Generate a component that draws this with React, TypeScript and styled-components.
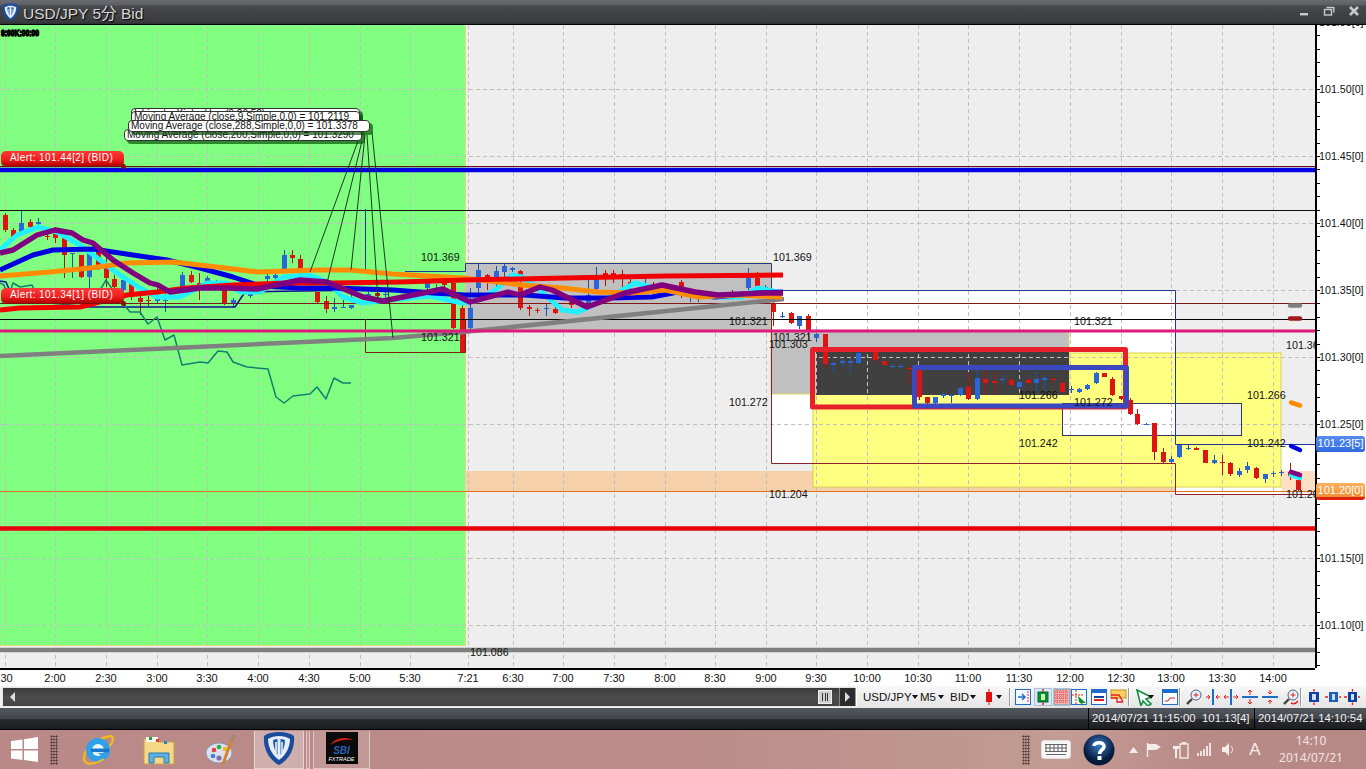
import React from "react";
import styled, { createGlobalStyle } from "styled-components";

const Global = createGlobalStyle`
  html, body { margin: 0; padding: 0; width: 1366px; height: 769px; overflow: hidden; background: #222; }
  #root { width: 1366px; height: 769px; }
  * { box-sizing: border-box; }
`;

const Win = styled.div`
  width: 1366px; height: 769px; display: flex; flex-direction: column;
  font-family: "Liberation Sans", Arial, sans-serif;
`;
const TitleBar = styled.header`
  height: 25px; flex: none; display: flex; align-items: center; padding: 0 0 0 2px; gap: 4px;
  background: linear-gradient(#6a6c72 0, #5c5e64 5px, #46484c 6px, #3a3b3f 22px, #2c2d30 24px, #000 24px);
`;
const TitleText = styled.span`
  font-size: 15.5px; color: #d8d8d8; text-shadow: 1px 1px 1px #000; margin-top: -2px; white-space: nowrap;
  font-family: "Liberation Sans", "Noto Sans CJK JP", sans-serif;
`;
const WinControls = styled.div`
  margin-left: auto; display: flex; align-items: center; height: 100%; padding-right: 5px; gap: 11px; margin-top: -3px;
`;
const ChartRow = styled.div`
  height: 643px; flex: none; display: flex;
`;
const PlotWrap = styled.div`
  position: relative; width: 1315px; height: 643px; overflow: hidden; background: #eeeeee;
`;
const Plot = styled.svg`
  display: block;
  text { font-family: "Liberation Sans", Arial, sans-serif; font-size: 10.7px; fill: #111; }
`;
const AlertTag = styled.div<{ $y: number }>`
  position: absolute; left: 1px; top: ${p => p.$y}px; width: 123px; height: 15px; border-radius: 5px;
  background: linear-gradient(#ff3a3a, #ee1c1c 60%, #b00000);
  box-shadow: 0 1px 0 #7a1010;
  color: #fff; font-size: 10px; line-height: 14px; padding-left: 9px; letter-spacing: .42px; white-space: nowrap;
`;
const AlertDot = styled.i<{ $y: number }>`
  position: absolute; left: 121px; top: ${p => p.$y}px; width: 5px; height: 5px; border-radius: 50%; background: #8a1010;
`;
const Bubble = styled.div<{ $x: number; $y: number; $w: number }>`
  position: absolute; left: ${p => p.$x}px; top: ${p => p.$y}px; width: ${p => p.$w}px; height: 12px;
  border: 1px solid #333; border-radius: 4px; background: #fff; color: #111;
  box-shadow: 3px 3px 0 rgba(0, 70, 0, .65);
  font-size: 10px; line-height: 10px; padding-left: 2px; white-space: nowrap; overflow: hidden;
`;
const PriceAxis = styled.div`
  position: relative; width: 51px; height: 643px; background: #fff; overflow: hidden;
`;
const AxisSvg = styled.svg`
  display: block;
  text { font-family: "Liberation Sans", Arial, sans-serif; font-size: 10.7px; fill: #111; }
`;
const PriceTag = styled.div<{ $y: number; $kind: "blue" | "orange" }>`
  position: absolute; left: 1px; top: ${p => p.$y}px; width: 49px; height: ${p => p.$kind === "blue" ? 16 : 17}px;
  border-radius: 3px; color: #fff; font-size: 11px; line-height: 15px; text-align: center;
  background: ${p => p.$kind === "blue"
    ? "linear-gradient(#5a8cf0, #2f6ae0)"
    : "linear-gradient(#ffb060, #f09030 82%, #e02010 84%, #e02010)"};
`;
const TimeAxis = styled.svg`
  display: block; flex: none; background: #fff;
  text { font-family: "Liberation Sans", Arial, sans-serif; font-size: 11px; fill: #111; }
`;
const ScrollRow = styled.div`
  height: 22px; flex: none; display: flex; background: #f0f0f0;
`;
const ScrollTrack = styled.div`
  width: 853px; flex: none; display: flex; align-items: center; padding: 0 0 0 7px; margin: 1px 0 1px 2px;
  background: linear-gradient(#3a3a3a, #4c4c4c 50%, #444); border: 1px solid #e4e4e4; border-right: 0; color: #ddd;
`;
const Arrow = styled.i<{ $dir: "left" | "right" }>`
  width: 0; height: 0; border: 5px solid transparent; border-width: 5px 0;
  ${p => p.$dir === "left" ? "border-right: 5px solid #ddd; border-left: 0; border-top: 5px solid transparent;" : "border-left: 5px solid #ddd; border-right: 0;"}
`;
const ThumbGrip = styled.div`
  margin-left: auto; margin-right: 7px; width: 14px; height: 14px; background: #d0d0d0; padding: 2px 3px;
  display: flex; justify-content: space-between; border: 1px solid #eee;
  b { width: 1px; background: #333; display: block; }
`;
const RightBtn = styled.div`
  width: 16px; height: 100%; background: #2c2c2c; display: flex; align-items: center; justify-content: center; border-left: 1px solid #888;
`;
const Toolbar = styled.div`
  flex: 1; display: flex; align-items: center; color: #111; font-size: 11.5px;
  background: linear-gradient(#f8f8f8, #e4e4e4);
`;
const Sep = styled.i<{ $l: number }>`
  width: 2px; height: 18px; margin-left: ${p => p.$l}px; flex: none; border-left: 1px solid #999; border-right: 1px solid #fff;
`;
const Drop = styled.span<{ $l: number; $w: number }>`
  margin-left: ${p => p.$l}px; width: ${p => p.$w}px; flex: none; display: flex; justify-content: space-between; align-items: center; white-space: nowrap;
  &::after { content: ""; border: 3.5px solid transparent; border-top: 4px solid #111; border-bottom: 0; }
`;
const ToolBtn = styled.span<{ $l: number; $on?: boolean }>`
  margin-left: ${p => p.$l}px; width: 18px; height: 18px; flex: none; display: flex; align-items: center; justify-content: center;
  ${p => p.$on ? "background: #dce8f4; box-shadow: inset 0 0 0 1px #a8c0d8;" : ""}
`;
const StatusBar = styled.div`
  height: 22px; flex: none; display: flex; justify-content: flex-end; color: #f0f0f0; font-size: 11.4px;
  background: linear-gradient(#52565e, #42464c 50%, #2a2b2e 52%, #1c1d20);
  border-bottom: 1px solid #000;
`;
const StatusCell = styled.div<{ $w: number }>`
  width: ${p => p.$w}px; padding-left: 3px; line-height: 21px; border-left: 1px solid #000; white-space: pre;
`;
const Taskbar = styled.footer`
  flex: 1; display: flex; align-items: center; position: relative;
  background: linear-gradient(90deg, #b88986 0, #bb8c89 50%, #c09a90 75%, #c49c94 78%, #b88a86 88%, #b78986 100%);
`;
const Item = styled.div<{ $l: number; $w: number }>`
  margin-left: ${p => p.$l}px; width: ${p => p.$w}px; height: 100%; flex: none; display: flex; align-items: center; justify-content: center;
`;
const Grip = styled.div<{ $l: number }>`
  margin-left: ${p => p.$l}px; width: 8px; height: 30px; flex: none;
  background-image: radial-gradient(#5a4040 45%, transparent 55%); background-size: 2.6px 3px;
`;
const AppBtn = styled.div<{ $l: number; $w: number; $on?: boolean }>`
  margin-left: ${p => p.$l}px; width: ${p => p.$w}px; height: 38px; flex: none; display: flex; align-items: center; justify-content: center;
  background: rgba(255,255,255,${p => p.$on ? .32 : .12}); border: 1px solid rgba(255,255,255,.45); border-top: 0;
`;
const SbiTile = styled.div`
  width: 32px; height: 32px; background: #0a0a0a; margin-top: -2px; position: relative; display: flex; flex-direction: column; align-items: center; justify-content: flex-end;
  color: #fff; font-size: 5.6px; padding-bottom: 2px; font-style: italic;
  strong { font-size: 10px; line-height: 10px; color: #2a5fb8; font-weight: 700; }
  svg { position: absolute; left: 3px; top: 4px; }
`;
const Clock = styled.div`
  margin-left: 15px; width: 70px; text-align: center; color: #f0e4e0; font-size: 12px; line-height: 16px; display: flex; flex-direction: column; gap: 1px; margin-top: -1px;
  font-family: "Noto Sans", sans-serif;
`;
const ImeA = styled.span`
  font-size: 17px; color: #f4ecea; font-family: "Liberation Sans", sans-serif;
`;

/* ---------- chart data (page coordinates) ---------- */
type C = [number, number, number, number, number, "r" | "b"];
const candles: C[] = [
  [5,213,215,230,232,"r"],[13,228,230,237,240,"r"],[21,210,223,232,233,"b"],[30,219,222,227,228,"r"],[38,218,222,224,226,"b"],
  [47,232,236,237,240,"r"],[55,227,233,238,243,"r"],[64,238,238,255,278,"r"],[72,253,253,254,278,"b"],[81,255,255,277,278,"r"],
  [89,250,253,277,288,"b"],[98,248,252,267,270,"r"],[106,257,268,278,287,"r"],[114,275,279,287,290,"r"],[123,276,280,290,292,"b"],
  [131,280,283,297,300,"r"],[140,295,298,302,315,"r"],[148,296,300,301,306,"r"],[157,285,298,301,304,"b"],[165,293,300,301,312,"b"],
  [182,272,275,287,292,"b"],[191,271,275,282,283,"r"],[199,273,283,285,300,"r"],[207,276,278,282,284,"b"],[216,280,281,283,288,"r"],
  [224,285,290,303,305,"r"],[233,298,300,303,308,"b"],[241,285,288,290,292,"b"],[250,290,292,296,298,"b"],[267,273,276,279,285,"b"],
  [275,270,275,278,282,"b"],[284,250,255,270,272,"b"],[292,250,255,258,263,"r"],[300,255,259,270,275,"r"],[317,292,292,302,303,"r"],
  [326,296,301,309,313,"r"],[334,298,307,309,312,"b"],[343,300,307,308,308,"b"],[351,294,297,300,301,"b"],[351,305,305,308,309,"b"],
  [368,292,294,296,302,"b"],[377,290,293,296,299,"r"],[385,291,294,295,298,"b"],[427,280,283,288,296,"b"],[436,284,288,289,296,"b"],
  [444,278,283,285,288,"r"],[453,282,283,328,329,"r"],[462,305,308,352,353,"r"],[470,288,308,328,329,"b"],[478,264,270,288,296,"b"],
  [487,274,275,277,290,"r"],[496,266,271,280,292,"b"],[504,264,266,272,278,"b"],[512,267,268,270,272,"b"],[520,270,271,275,285,"r"],
  [520,285,287,308,310,"r"],[529,305,307,309,316,"r"],[537,308,310,311,313,"r"],[546,303,308,309,316,"b"],[555,307,309,313,314,"r"],
  [571,302,302,305,308,"r"],[588,276,295,304,310,"b"],[596,267,276,289,294,"b"],[605,270,273,275,286,"r"],[613,270,273,275,283,"r"],
  [622,270,274,276,290,"r"],[630,279,282,284,298,"r"],[645,279,284,286,290,"b"],[653,282,285,288,294,"r"],[681,280,282,287,298,"r"],
  [690,290,294,296,302,"b"],[698,292,296,297,302,"b"],[715,292,295,296,298,"b"],[732,290,294,296,300,"r"],[748,268,278,288,290,"b"],
  [757,272,278,286,290,"r"],[765,285,287,289,292,"b"],[773,296,304,312,326,"r"],[782,312,316,317,318,"b"],[791,312,313,323,324,"r"],
  [799,316,316,326,329,"b"],[808,314,316,330,340,"r"],[816,333,334,338,342,"b"],[825,334,334,364,368,"r"],[833,363,363,365,372,"b"],
  [842,358,361,363,366,"b"],[850,358,361,363,372,"b"],[858,352,353,363,364,"b"],[867,351,351,352,352,"b"],[875,351,352,360,362,"r"],
  [884,361,361,365,366,"r"],[892,364,366,367,368,"b"],[900,364,366,367,368,"b"],[909,366,368,369,384,"r"],[919,368,370,397,400,"r"],
  [927,397,397,403,404,"r"],[935,397,397,403,405,"b"],[943,392,394,396,398,"b"],[951,394,395,396,403,"b"],[960,387,388,395,396,"b"],
  [968,373,387,399,400,"r"],[977,370,378,399,400,"b"],[985,370,379,383,395,"r"],[994,372,381,383,395,"r"],[1002,375,379,380,383,"b"],
  [1011,378,380,385,386,"r"],[1019,380,382,387,388,"b"],[1028,378,380,383,385,"r"],[1036,372,379,383,392,"b"],[1044,376,378,380,390,"b"],
  [1053,375,379,380,383,"r"],[1062,379,383,392,393,"r"],[1071,386,389,390,393,"b"],[1079,388,389,392,393,"b"],[1087,384,385,389,390,"b"],
  [1096,372,373,383,384,"b"],[1104,373,373,377,377,"r"],[1112,377,379,395,396,"r"],[1121,396,396,399,400,"r"],[1130,398,400,414,415,"r"],
  [1137,409,414,424,425,"r"],[1146,423,424,425,425,"b"],[1154,423,423,452,460,"r"],[1163,448,452,462,463,"r"],[1171,456,459,462,463,"b"],
  [1179,444,444,457,458,"b"],[1188,445,448,449,450,"b"],[1196,447,448,450,450,"r"],[1205,450,450,463,463,"r"],[1214,455,460,463,464,"b"],
  [1222,455,462,463,475,"r"],[1230,462,463,474,476,"r"],[1239,468,471,475,477,"b"],[1247,462,466,470,473,"b"],[1256,467,468,478,479,"r"],
  [1265,474,474,479,483,"b"],[1273,471,473,474,477,"b"],[1281,470,472,473,476,"b"],[1290,463,472,476,480,"r"],[1298,478,480,490,491,"r"],
];
const hGrid = [89, 156, 223, 290, 357, 424, 491, 558, 625];
const vGrid = [5,55,106,157,207,258,309,360,410,468,513,563,614,665,715,766,816,867,918,968,1019,1070,1121,1171,1222,1273];
const timeLabels: [number, string][] = [[5,":30"],[55,"2:00"],[106,"2:30"],[157,"3:00"],[207,"3:30"],[258,"4:00"],[309,"4:30"],[360,"5:00"],[410,"5:30"],[468,"7:21"],[513,"6:30"],[563,"7:00"],[614,"7:30"],[665,"8:00"],[715,"8:30"],[766,"9:00"],[816,"9:30"],[867,"10:00"],[918,"10:30"],[968,"11:00"],[1019,"11:30"],[1070,"12:00"],[1121,"12:30"],[1171,"13:00"],[1222,"13:30"],[1273,"14:00"]];
const notes: [number, number, string][] = [[421,261,"101.369"],[773,261,"101.369"],[421,341,"101.321"],[729,325,"101.321"],[773,341,"101.321"],[769,348,"101.303"],[729,406,"101.272"],[769,498,"101.204"],[1074,325,"101.321"],[1286,349,"101.36"],[1019,399,"101.266"],[1074,406,"101.272"],[1247,399,"101.266"],[1019,447,"101.242"],[1247,447,"101.242"],[1286,498,"101.20"],[470,656,"101.086"]];

const P = (a: number[][]) => a.map(p => p.join(",")).join(" ");
const teal = [[0,283],[4,285],[8,298],[13,283],[20,287],[32,285],[40,302],[90,307],[106,280],[115,293],[130,312],[140,312],[148,324],[157,317],[165,340],[174,335],[182,365],[200,362],[208,363],[218,351],[227,352],[233,362],[247,367],[268,369],[276,397],[284,403],[293,396],[310,394],[317,387],[326,399],[334,378],[343,383],[351,383]];
const gray = [[0,356],[393,338],[463,332],[784,299]];
const orange = [[0,276],[50,272],[90,268],[127,263],[173,262],[217,267],[257,272],[317,270],[350,270],[393,274],[463,278],[522,285],[562,288],[598,292],[632,293],[665,290],[698,297],[738,295],[782,297]];
const blue = [[0,270],[33,255],[53,250],[93,249],[133,255],[167,260],[200,268],[233,277],[260,286],[300,288],[333,288],[393,290],[433,293],[465,295],[525,295],[565,298],[608,298],[652,297],[678,292],[715,297],[758,293],[783,292]];
const cyan = [[0,250],[17,235],[38,227],[57,232],[80,245],[100,260],[117,273],[140,288],[157,297],[180,297],[207,283],[227,283],[240,292],[260,292],[283,277],[310,275],[327,282],[343,297],[363,303],[387,300],[430,296],[462,303],[480,300],[498,288],[512,275],[522,277],[542,292],[562,310],[578,312],[608,298],[635,283],[655,288],[678,293],[715,297],[742,297],[758,288],[782,293]];
const purple = [[0,253],[13,250],[37,235],[55,230],[72,233],[83,240],[93,243],[113,260],[133,273],[150,283],[158,285],[170,292],[200,288],[227,288],[257,289],[300,280],[327,282],[363,297],[383,301],[443,289],[470,302],[508,292],[520,295],[540,287],[552,290],[587,307],[625,293],[662,285],[695,292],[718,295],[765,293],[783,293]];
const red = [[0,310],[20,308],[80,307],[127,295],[157,292],[187,288],[233,285],[287,283],[333,283],[400,282],[465,280],[565,278],[665,276],[783,275]];
const navy = [[0,281],[6,282],[12,296],[60,303],[75,307],[235,307],[245,292],[365,290]];
const leaders = [[358,141,310,272],[362,141,327,283],[365,135,351,270],[367,135,378,300],[372,132,393,338]];

const Chart = () => (
  <Plot width={1315} height={643} viewBox="0 25 1315 643">
    <rect x={0} y={25} width={465} height={620} fill="#80ff80" />
    <path d="M465.5 25V645.5H0" fill="none" stroke="#e0e070" />
    <rect x={465} y={471} width={850} height={20} fill="#f5d0a8" />
    <rect x={1282} y={444} width={33} height={27} fill="#fff" />
    <rect x={1175} y={444} width={107} height={50} fill="#fff" />
    <rect x={1282} y={471} width={33} height={20} fill="#ffdfc4" />
    <rect x={771} y={291} width={404} height={172} fill="#fff" />
    <rect x={465} y={263} width={306} height={68} fill="#c0c0c0" stroke="#e0d860" />
    <rect x={813} y={353} width={468} height={134} fill="#ffff80" stroke="#d8d050" />
    <rect x={771} y={331} width={298} height={63} fill="#c0c0c0" stroke="#e0d860" />
    <rect x={816} y={352} width={253} height={43} fill="#404040" />
    <rect x={1062} y={403} width={113} height={32} fill="#fff" />
    <rect x={1175} y={403} width={66} height={32} fill="#eee" />
    <g stroke="#c0c0c0" strokeDasharray="4 3">
      {hGrid.map(y => <line key={y} x1={0} x2={1315} y1={y + .5} y2={y + .5} />)}
      {vGrid.map(x => <line key={x} x1={x + .5} x2={x + .5} y1={25} y2={668} />)}
    </g>
    <rect x={1062.5} y={403.5} width={179} height={32} fill="none" stroke="#303860" />
    {candles.map(([x, h, t, b, l, c], i) => {
      const col = c === "r" ? "#dc1414" : "#2a66d8";
      return (
        <g key={i}>
          <line x1={x + .5} x2={x + .5} y1={h} y2={l} stroke={c === "r" ? "#b01010" : "#2050a8"} />
          <rect x={x - 2} y={t} width={5} height={Math.max(b - t, 1)} fill={col} />
        </g>
      );
    })}
    <g fill="none" strokeLinejoin="round">
      <path d="M0 166.5H1315" stroke="#6a1010" />
      <path d="M0 170H1315" stroke="#0000e0" strokeWidth={4.5} />
      <path d="M0 210.5H1315" stroke="#101010" />
      <path d="M0 303.5H1315" stroke="#801818" />
      <path d="M0 319.5H1315" stroke="#000" />
      <path d="M465 491.5H0M465 491.5H1315" stroke="#e07020" />
      <path d="M365.5 319V352.5H465.5V320" stroke="#802010" />
      <path d="M771.5 303V463.5H1175.5V494.5H1315" stroke="#902030" />
      <path d="M365.5 209V271M405 271.5H465.5V263.5H771.5V290.5H1175.5V444.5H1315" stroke="#203890" />
      <polyline points={P(navy)} stroke="#101090" strokeWidth={1.5} />
      <polyline points={P(teal)} stroke="#108070" strokeWidth={1.5} />
      <polyline points={P(gray)} stroke="#808080" strokeWidth={4.5} />
      <polyline points={P(cyan)} stroke="#20f0ff" strokeWidth={5} />
      <polyline points={P(blue)} stroke="#0000e0" strokeWidth={5} />
      <polyline points={P(orange)} stroke="#ff8c00" strokeWidth={5} />
      <polyline points={P(red)} stroke="#f00000" strokeWidth={5} />
      <polyline points={P(purple)} stroke="#800080" strokeWidth={5.4} />
      <path d="M0 331H1315" stroke="#e0187a" strokeWidth={3} />
      <path d="M0 528.5H1315" stroke="#e8000c" strokeWidth={4.5} />
      <path d="M0 650H1315" stroke="#808080" strokeWidth={4.5} />
      {leaders.map((l, i) => <line key={i} x1={l[0]} y1={l[1]} x2={l[2]} y2={l[3]} stroke="#1a3a22" />)}
      <rect x={812.5} y={349.5} width={313} height={57.5} stroke="#e8202c" strokeWidth={5} />
      <rect x={914.5} y={367.5} width={212} height={38.5} stroke="#3b48c0" strokeWidth={5} />
      <g strokeLinecap="round" strokeWidth={4.5}>
        <path d="M1290 305.5H1300" stroke="#808080" />
        <path d="M1290 318.5H1300" stroke="#a01818" />
        <path d="M1291 402.5L1300 405.5" stroke="#ff8c00" />
        <path d="M1291 446L1300 450" stroke="#0000e0" />
        <path d="M1291 475L1300 478" stroke="#20f0ff" />
        <path d="M1291 472L1300 475" stroke="#800080" />
      </g>
    </g>
    {notes.map(([x, y, s], i) => <text key={i} x={x} y={y}>{s}</text>)}
    <text x={1} y={36} fontWeight={700} stroke="#000" strokeWidth={1.3} textLength={38} lengthAdjust="spacingAndGlyphs" style={{ fontSize: 9 }}>9:00K:00:00</text>
  </Plot>
);

const axisLabels = [["101.55[0]", 22], ["101.50[0]", 89], ["101.45[0]", 156], ["101.40[0]", 223], ["101.35[0]", 290], ["101.30[0]", 357], ["101.25[0]", 424], ["101.20[0]", 491], ["101.15[0]", 558], ["101.10[0]", 625]] as [string, number][];
const ticks = Array.from({ length: 50 }, (_, i) => 35.4 + i * 13.4);
const Axis = () => (
  <AxisSvg width={51} height={643} viewBox="1315 25 51 643">
    <path d="M1316 25V668" stroke="#000" strokeWidth={2} />
    {ticks.map((y, i) => <line key={i} x1={1316} x2={1320} y1={Math.round(y) + .5} y2={Math.round(y) + .5} stroke="#000" />)}
    {axisLabels.map(([s, y]) => <text key={s} x={1319} y={y + 4}>{s}</text>)}
  </AxisSvg>
);

const Shield = ({ s }: { s: number }) => (
  <svg width={s} height={s * 1.1} viewBox="0 0 32 35">
    <path d="M16 1C22 1 27 2 31 5C32 17 27 28 16 34C5 28 0 17 1 5C5 2 10 1 16 1Z" fill="#1b4c9c" />
    <path d="M16 5C20 5 24 6 27 8C27 16 23 24 16 29C9 24 5 16 5 8C8 6 12 5 16 5Z" fill="#e8eef8" />
    <path d="M16 8C18 8 20 8 22 9C22 15 20 20 17.5 24V8ZM16 8C14 8 12 8 10 9C10 15 12 20 14.5 24V8Z" fill="#1b5cb0" />
    <path d="M13 11V22M19 11V22" stroke="#e8eef8" strokeWidth={1.6} />
  </svg>
);

type K = "goto" | "hold" | "grid" | "cross" | "win" | "note" | "cursor" | "panel" | "zoomin" | "h1" | "h2" | "v1" | "v2" | "zoomout" | "s1" | "s2" | "s3";
const Tool = ({ k }: { k: K }) => {
  const blue = "#1c6cc8";
  const red = "#e02020";
  const body: Record<K, React.ReactNode> = {
    goto: <><rect x=".5" y=".5" width="15" height="15" fill="#f4f8ff" stroke={blue} /><path d="M3 8H10M7 5L10 8L7 11" stroke={blue} fill="none" strokeWidth="1.5" /><path d="M13 2V14" stroke={red} strokeDasharray="2 1" /></>,
    hold: <><rect x="3" y="3" width="10" height="10" fill="#109020" stroke="#064" /><rect x="6" y="5" width="4" height="6" fill="#bfb" /><path d="M8 0V2.5M8 13.5V16" stroke={red} strokeWidth="1.5" /></>,
    grid: <><rect x=".5" y=".5" width="15" height="15" fill="#f8b0b0" stroke="#a8a8a8" /><path d="M3 1V15M6 1V15M9 1V15M12 1V15M1 3H15M1 6H15M1 9H15M1 12H15" stroke="#e04040" strokeDasharray="1 1" /></>,
    cross: <><rect x=".5" y=".5" width="15" height="15" fill="#f4fff4" stroke={blue} /><path d="M5 1V15M1 6H12" stroke={red} strokeDasharray="2 1" /><path d="M7 7L15 14L11 14L13 17L8 13Z" fill="#109030" /></>,
    win: <><rect x=".5" y=".5" width="15" height="15" fill="#fff" stroke={blue} /><rect x="1" y="1" width="14" height="3" fill={blue} /><path d="M3 8H13" stroke="#1040a0" strokeWidth="2" /><path d="M3 11H13" stroke={red} strokeWidth="2" /></>,
    note: <><rect x="1" y="1" width="15" height="8" fill="#ffd060" stroke="#c89020" /><path d="M1 6H9L13 13M1 9H7V13H13" stroke={red} fill="none" strokeWidth="1.3" /></>,
    cursor: <path d="M2 1L16 8L11 10L16 15L13 17L8 12L6 17Z" fill="#fff" stroke="#109040" strokeWidth="1.6" />,
    panel: <><rect x=".5" y=".5" width="15" height="15" fill="#fff" stroke={blue} /><rect x="1" y="1" width="14" height="3" fill={blue} /><path d="M3 12H6L8 9H13" stroke={red} fill="none" /></>,
    zoomin: <><circle cx="10" cy="6" r="5" fill="#e8f4ff" stroke="#506070" /><path d="M7.5 6H12.5M10 3.5V8.5" stroke={red} /><path d="M6 10L1 15" stroke="#404040" strokeWidth="2.4" /></>,
    h1: <><path d="M8 0V16" stroke={blue} strokeWidth="2" /><path d="M1 8H5M3 6L5 8L3 10M15 8H11M13 6L11 8L13 10" stroke={red} fill="none" /></>,
    h2: <><path d="M8 0V16" stroke={blue} strokeWidth="2" /><path d="M6 8H1M3 6L1 8L3 10M10 8H15M13 6L15 8L13 10" stroke={red} fill="none" /></>,
    v1: <><path d="M0 8H16" stroke={blue} strokeWidth="2" /><path d="M8 6V1M6 3L8 1L10 3M8 10V15M6 13L8 15L10 13" stroke={red} fill="none" /></>,
    v2: <><path d="M0 8H16" stroke={blue} strokeWidth="2" /><path d="M8 1V5M6 3L8 5L10 3M8 15V11M6 13L8 11L10 13" stroke={red} fill="none" /></>,
    zoomout: <><circle cx="10" cy="6" r="5" fill="#e8f4ff" stroke="#506070" /><path d="M7.5 6H12.5M10 3.5V8.5" stroke={red} /><path d="M6 10L1 15" stroke="#404040" strokeWidth="2.4" /><path d="M8 14Q12 16 15 12" stroke={red} fill="none" strokeWidth="1.4" /></>,
    s1: <><rect x="3" y="3" width="10" height="10" fill="#1040a0" /><rect x="6" y="5" width="4" height="6" fill="#cfe0ff" /><path d="M8 0V2.5M8 13.5V16" stroke={red} strokeWidth="1.4" /></>,
    s2: <><rect x="4" y="3" width="9" height="10" fill="#1c60c0" /><rect x="7" y="5" width="3" height="6" fill="#cfe0ff" /><path d="M0 8H3M14 8H16" stroke={red} strokeWidth="1.4" /></>,
    s3: <><rect x="4" y="3" width="9" height="10" fill="#1040a0" /><rect x="7" y="5" width="3" height="6" fill="#cfe0ff" /><path d="M0 8H3M14 8H16M8.5 0V2.5M8.5 13.5V16" stroke={red} strokeWidth="1.4" /></>,
  };
  return <svg width={17} height={17} viewBox="0 0 17 17">{body[k]}</svg>;
};

export default function App() {
  return (
    <Win>
      <Global />
      <TitleBar>
        <Shield s={17} />
        <TitleText>USD/JPY 5分 Bid</TitleText>
        <WinControls>
          <svg width={14} height={14} viewBox="0 0 14 14"><rect x="3" y="9" width="8" height="2.4" fill="#c8c8c8" /></svg>
          <svg width={14} height={14} viewBox="0 0 14 14"><rect x="2.5" y="5.5" width="7" height="5.5" fill="none" stroke="#c8c8c8" strokeWidth="1.4" /><path d="M4.5 3.5H11.8V8.5" fill="none" stroke="#c8c8c8" strokeWidth="1.4" /></svg>
          <svg width={14} height={14} viewBox="0 0 14 14"><path d="M3 3L11 11M11 3L3 11" stroke="#c8c8c8" strokeWidth="2.6" /></svg>
        </WinControls>
      </TitleBar>
      <ChartRow>
        <PlotWrap>
          <Chart />
          <AlertTag $y={126}>Alert: 101.44[2] (BID)</AlertTag>
          <AlertDot $y={139} />
          <AlertTag $y={263}>Alert: 101.34[1] (BID)</AlertTag>
          <AlertDot $y={276} />
          <Bubble $x={124} $y={104} $w={238}>Moving Average (close,200,Simple,0,0) = 101.3290</Bubble>
          <Bubble $x={131} $y={83} $w={229}>Ichimoku Kinko Hyo (9,26,52)</Bubble>
          <Bubble $x={131} $y={86} $w={229}>Moving Average (close,9,Simple,0,0) = 101.2119</Bubble>
          <Bubble $x={128} $y={95} $w={242}>Moving Average (close,288,Simple,0,0) = 101.3378</Bubble>
        </PlotWrap>
        <PriceAxis>
          <Axis />
          <PriceTag $y={411} $kind="blue">101.23[5]</PriceTag>
          <PriceTag $y={458} $kind="orange">101.20[0]</PriceTag>
        </PriceAxis>
      </ChartRow>
      <TimeAxis width={1366} height={18} viewBox="0 668 1366 18">
        <rect x={0} y={668} width={1315} height={2} fill="#000" />
        {timeLabels.map(([x, s]) => (
          <g key={s}>
            <path d={`M${x + .5} 662V668`} stroke="#000" />
            <text x={x} y={682} textAnchor="middle">{s}</text>
          </g>
        ))}
      </TimeAxis>
      <ScrollRow>
        <ScrollTrack>
          <Arrow $dir="left" />
          <ThumbGrip><b /><b /><b /></ThumbGrip>
          <RightBtn><Arrow $dir="right" /></RightBtn>
        </ScrollTrack>
        <Toolbar>
          <Sep $l={0} />
          <Drop $l={6} $w={50}>USD/JPY</Drop>
          <Drop $l={7} $w={24}>M5</Drop>
          <Drop $l={6} $w={26}>BID</Drop>
          <ToolBtn $l={4}>
            <svg width={10} height={16} viewBox="0 0 10 16"><path d="M5 0V16" stroke="#e01010" /><rect x="2" y="3" width="6" height="10" fill="#e01010" /></svg>
          </ToolBtn>
          <Drop $l={-2} $w={7} />
          <Sep $l={6} />
          <ToolBtn $l={3}><Tool k="goto" /></ToolBtn>
          <ToolBtn $l={2} $on><Tool k="hold" /></ToolBtn>
          <ToolBtn $l={1} $on><Tool k="grid" /></ToolBtn>
          <ToolBtn $l={-1}><Tool k="cross" /></ToolBtn>
          <ToolBtn $l={2}><Tool k="win" /></ToolBtn>
          <ToolBtn $l={1}><Tool k="note" /></ToolBtn>
          <Sep $l={1} />
          <ToolBtn $l={4}><Tool k="cursor" /></ToolBtn>
          <Drop $l={-4} $w={7} />
          <ToolBtn $l={6}><Tool k="panel" /></ToolBtn>
          <Sep $l={0} />
          <ToolBtn $l={4}><Tool k="zoomin" /></ToolBtn>
          <ToolBtn $l={1}><Tool k="h1" /></ToolBtn>
          <ToolBtn $l={0}><Tool k="h2" /></ToolBtn>
          <ToolBtn $l={1}><Tool k="v1" /></ToolBtn>
          <ToolBtn $l={2}><Tool k="v2" /></ToolBtn>
          <ToolBtn $l={3}><Tool k="zoomout" /></ToolBtn>
          <Sep $l={0} />
          <ToolBtn $l={3}><Tool k="s1" /></ToolBtn>
          <ToolBtn $l={1}><Tool k="s2" /></ToolBtn>
          <ToolBtn $l={1}><Tool k="s3" /></ToolBtn>
        </Toolbar>
      </ScrollRow>
      <StatusBar>
        <StatusCell $w={166}>2014/07/21 11:15:00  101.13[4]</StatusCell>
        <StatusCell $w={112}>2014/07/21 14:10:54</StatusCell>
      </StatusBar>
      <Taskbar>
        <Item $l={11} $w={27}>
          <svg width={27} height={25} viewBox="0 0 27 25"><path d="M0 4L11.5 2.4V12H0ZM13 2.2L27 0V12H13ZM0 13.5H11.5V23L0 21.5ZM13 13.5H27V25L13 23Z" fill="#fff" /></svg>
        </Item>
        <Grip $l={12} />
        <Item $l={24} $w={32}>
          <svg width={32} height={32} viewBox="0 0 32 32">
            <path d="M3 28C-2 18 14 4 29 2C32 3 31 9 27 13" fill="none" stroke="#f4b820" strokeWidth="2.4" />
            <circle cx="16" cy="16" r="12" fill="#30a0e8" />
            <circle cx="16" cy="16" r="6" fill="#e8f6ff" />
            <rect x="9" y="14.5" width="18" height="3.6" fill="#1878c8" />
            <path d="M27 19L16 19L22 24" fill="#30a0e8" />
            <path d="M3 28C6 31 14 30 22 25" fill="none" stroke="#f4b820" strokeWidth="2" />
          </svg>
        </Item>
        <Item $l={29} $w={32}>
          <svg width={32} height={30} viewBox="0 0 32 30">
            <path d="M1 4H13L15 7H31V29H1Z" fill="#f5d888" stroke="#c8a050" />
            <rect x="3" y="2" width="12" height="5" fill="#f8f8f0" /><rect x="6" y="2" width="3" height="3" fill="#20a040" /><rect x="13" y="4" width="3" height="3" fill="#e04020" /><rect x="21" y="6" width="3" height="3" fill="#3080d0" />
            <path d="M6 28V18H26V28H21V22H11V28Z" fill="#60b0e0" stroke="#2878b8" />
          </svg>
        </Item>
        <Item $l={30} $w={32}>
          <svg width={32} height={32} viewBox="0 0 32 32">
            <ellipse cx="14" cy="19" rx="13" ry="10" fill="#dde0ee" stroke="#909ab0" />
            <circle cx="9" cy="16" r="2.3" fill="#e04040" /><circle cx="14" cy="13" r="2.3" fill="#30b040" /><circle cx="20" cy="15" r="2.3" fill="#e0c020" /><circle cx="8" cy="22" r="2.3" fill="#4080e0" /><circle cx="14" cy="24" r="2.6" fill="#8070b0" />
            <path d="M18 30L27 5" stroke="#d88030" strokeWidth="3" /><path d="M26 7L30 1" stroke="#a08870" strokeWidth="3.4" />
          </svg>
        </Item>
        <AppBtn $l={17} $w={50} $on><Shield s={32} /></AppBtn>
        <AppBtn $l={2} $w={4} />
        <AppBtn $l={3} $w={57}>
          <SbiTile>
            <svg width={26} height={10} viewBox="0 0 26 10"><path d="M1 9C6 2 16 0 25 4C18 3 8 4 1 9Z" fill="#d02020" /></svg>
            <strong>SBI</strong>
            <span>FXTRADE</span>
          </SbiTile>
        </AppBtn>
        <Grip $l={652} />
        <Item $l={11} $w={30}>
          <svg width={30} height={19} viewBox="0 0 30 19"><rect x=".7" y=".7" width="28.6" height="17.6" rx="2" fill="#f8f8f8" stroke="#e8e8e8" /><path d="M4 4.5H26M4 8H26M4 11.5H26M5 14.5H25M5 4V12M9 4V12M13 4V12M17 4V12M21 4V12M25 4V12" stroke="#555" strokeWidth=".9" /></svg>
        </Item>
        <Item $l={12} $w={32}>
          <svg width={32} height={32} viewBox="0 0 32 32"><defs><radialGradient id="hg" cx=".5" cy=".35"><stop offset="0" stopColor="#3a7cc8" /><stop offset="1" stopColor="#061a3c" /></radialGradient></defs><circle cx="16" cy="16" r="15.5" fill="url(#hg)" /><path d="M11 12C11 8 21 7 21 12.5C21 16 16.5 16 16.5 20" fill="none" stroke="#fff" strokeWidth="3.6" /><rect x="14.5" y="22" width="4" height="4" fill="#fff" /></svg>
        </Item>
        <Item $l={12} $w={12}>
          <svg width={9} height={6} viewBox="0 0 9 6"><path d="M0 6L4.5 0L9 6Z" fill="#f4ecea" /></svg>
        </Item>
        <Item $l={7} $w={16}>
          <svg width={16} height={16} viewBox="0 0 16 16"><path d="M1.5 1V15" stroke="#f4ecea" strokeWidth="1.4" /><path d="M2 2H10L15 5L10 8H2Z" fill="#f4ecea" /></svg>
        </Item>
        <Item $l={11} $w={16}>
          <svg width={16} height={18} viewBox="0 0 16 18"><rect x="7" y="3" width="8" height="14" fill="none" stroke="#f4ecea" strokeWidth="1.4" /><rect x="9" y="1" width="4" height="2" fill="#f4ecea" /><path d="M1 1V5M5 1V5M0 5H6V8H4V17H2V8H0Z" fill="#f4ecea" /></svg>
        </Item>
        <Item $l={8} $w={15}>
          <svg width={15} height={13} viewBox="0 0 15 13"><path d="M1 10V13M4 8V13M7 6V13M10 3V13M13 0V13" stroke="#f4ecea" strokeWidth="1.8" /></svg>
        </Item>
        <Item $l={10} $w={13}>
          <svg width={13} height={15} viewBox="0 0 13 15"><path d="M0 5H3L7 1V14L3 10H0Z" fill="#f4ecea" /><path d="M9 4C11 6 11 9 9 11" stroke="#f4ecea" fill="none" /></svg>
        </Item>
        <Item $l={14} $w={12}><ImeA>A</ImeA></Item>
        <Clock><span>14:10</span><span>2014/07/21</span></Clock>
      </Taskbar>
    </Win>
  );
}
